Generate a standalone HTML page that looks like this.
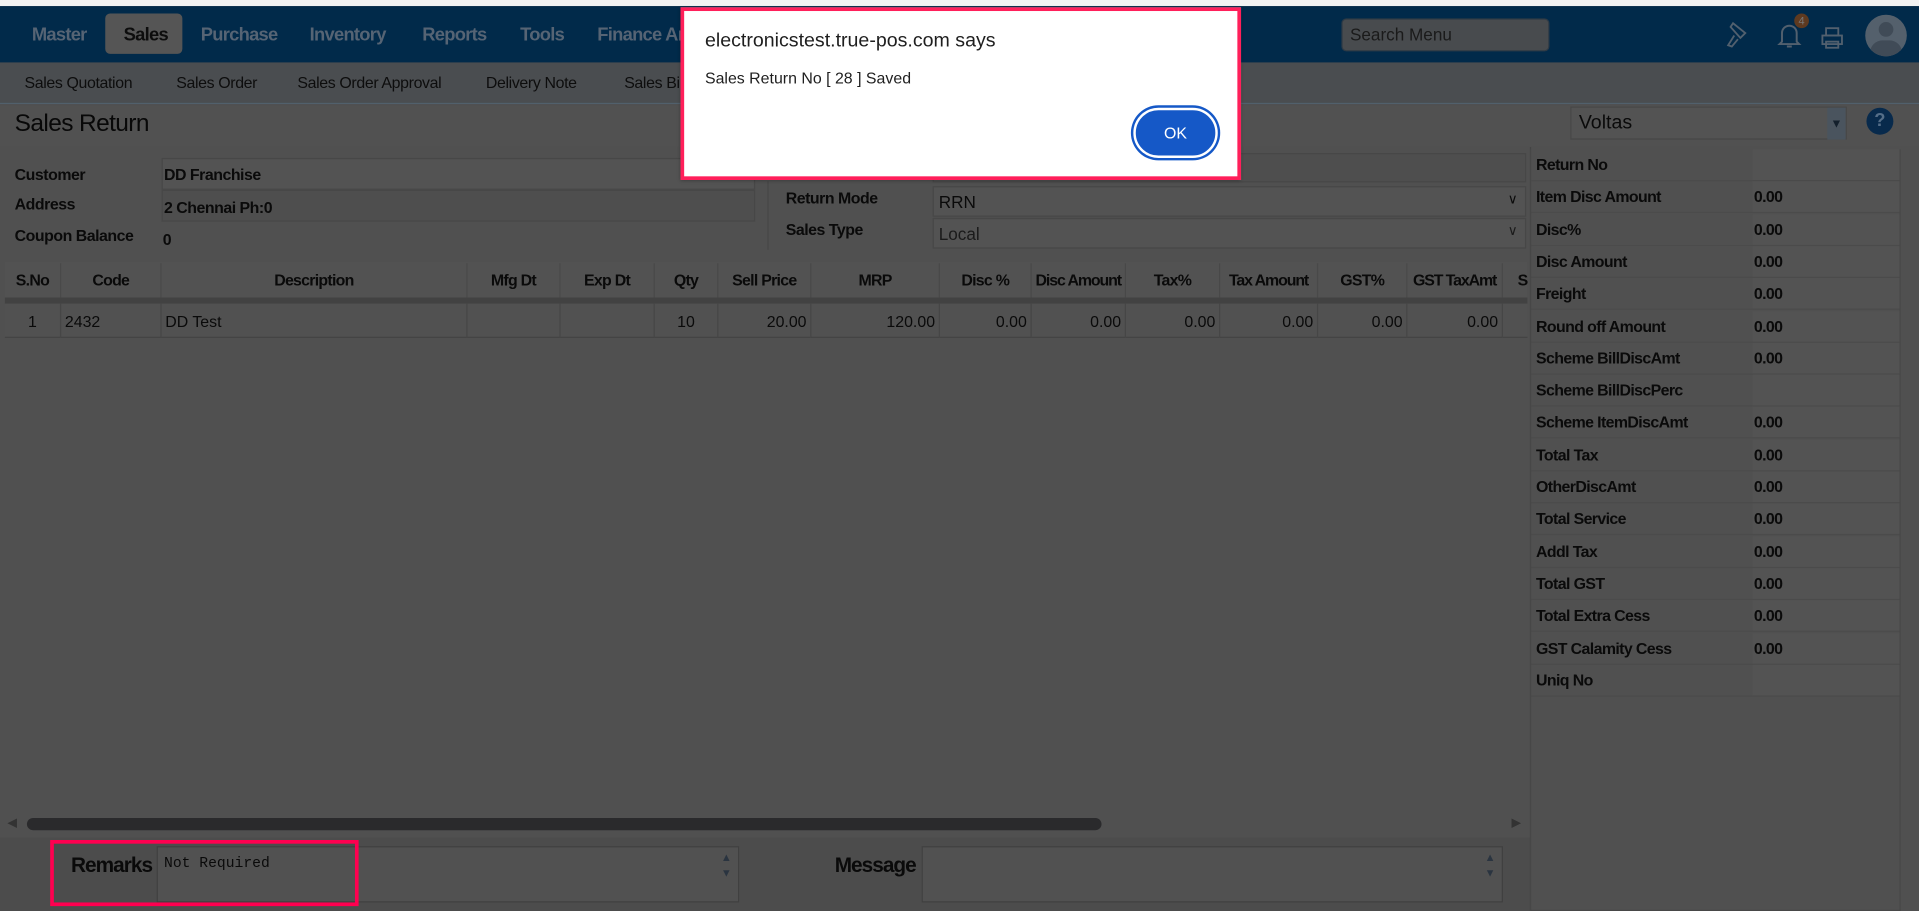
<!DOCTYPE html>
<html><head><meta charset="utf-8"><style>
*{box-sizing:border-box;margin:0;padding:0}
html,body{width:1919px;height:911px;overflow:hidden;background:#505050}
#s{position:absolute;left:0;top:0;width:1568px;height:744px;transform:scale(1.2239,1.2245);transform-origin:0 0;background:#505050;font-family:"Liberation Sans",sans-serif;color:#0a0a0a;font-size:13px;overflow:hidden;white-space:nowrap}
.a{position:absolute}
.nav{left:0;top:5px;width:1568px;height:46px;background:#012a4a}
.nav span{position:absolute;top:15px;font-size:15px;font-weight:bold;color:#566474;letter-spacing:-0.6px}
.sub{left:0;top:51px;width:1568px;height:34px;background:#4a4d50;border-bottom:1px solid #51606c}
.sub span{position:absolute;top:9px;font-size:13px;color:#0d0d0d;letter-spacing:-0.3px}
.fld{background:#535353;border:1px solid #474747}
.lbl{font-weight:bold;font-size:13px;letter-spacing:-0.4px}
.th{position:absolute;top:215px;height:28px;border-right:1px solid #494949;font-weight:bold;text-align:center;line-height:28px;font-size:13px;letter-spacing:-0.6px}
.td{position:absolute;top:248px;height:28px;border-right:1px solid #464646;line-height:30px;font-size:13px;padding:0 3px}
.rp div{position:absolute;left:0;width:301px;height:26px;border-bottom:1px solid #4b4b4b;font-weight:bold;font-size:13px;line-height:26px;padding-left:4px;letter-spacing:-0.5px}
.rp div b{position:absolute;left:181px;top:0;width:120px;height:25px;background:#535353;padding-left:1px}
</style></head><body><div id="s">
<div class="a" style="left:0;top:0;width:1568px;height:5px;background:#f2f2f2"></div>
<div class="a nav">
<div class="a" style="left:86px;top:6px;width:63px;height:33px;background:#555;border-radius:4px"></div>
<span style="left:26px">Master</span><span style="left:101px;color:#0d0d0d">Sales</span><span style="left:164px">Purchase</span><span style="left:253px">Inventory</span><span style="left:345px">Reports</span><span style="left:425px">Tools</span><span style="left:488px">Finance An</span>
<div class="a" style="left:1096px;top:10px;width:170px;height:27px;background:#484b4e;border:1px solid #2e3a45;border-radius:4px;color:#1a1a1a;font-size:14px;padding:4px 6px">Search Menu</div>
<svg class="a" style="left:1408px;top:10px" width="24" height="26" viewBox="0 0 24 26" fill="none" stroke="#52606e" stroke-width="1.5"><path d="M8 4l10 8-4 4-8-9zM9 14l-5 8 3 1 5-6"/></svg>
<svg class="a" style="left:1452px;top:12px" width="20" height="24" viewBox="0 0 20 24" fill="none" stroke="#52606e" stroke-width="1.6"><path d="M4 17V10a6 6 0 0 1 12 0v7l2 2H2zM8 21h4"/></svg>
<div class="a" style="left:1466px;top:6px;width:12px;height:12px;border-radius:6px;background:#5e3a20;color:#777;font-size:9px;text-align:center;line-height:12px">4</div>
<svg class="a" style="left:1487px;top:16px" width="20" height="20" viewBox="0 0 20 20" fill="none" stroke="#52606e" stroke-width="1.5"><rect x="5" y="2" width="10" height="6"/><rect x="2" y="8" width="16" height="7"/><rect x="5" y="13" width="10" height="5"/></svg>
<div class="a" style="left:1524px;top:7px;width:34px;height:34px;border-radius:17px;background:#54606c;overflow:hidden"><div class="a" style="left:11px;top:6px;width:12px;height:12px;border-radius:6px;background:#404b57"></div><div class="a" style="left:4px;top:21px;width:26px;height:20px;border-radius:13px;background:#404b57"></div></div>
</div>
<div class="a sub"><span style="left:20px">Sales Quotation</span><span style="left:144px">Sales Order</span><span style="left:243px">Sales Order Approval</span><span style="left:397px">Delivery Note</span><span style="left:510px">Sales Bi</span></div>
<div class="a" style="left:0;top:86px;width:1568px;height:34px;background:#515151"></div>
<div class="a" style="left:12px;top:90px;font-size:20px;color:#080808;letter-spacing:-0.5px">Sales Return</div>
<div class="a fld" style="left:1283px;top:87px;width:226px;height:27px;font-size:16px;padding:4px 6px">Voltas</div>
<div class="a" style="left:1493px;top:88px;width:15px;height:26px;background:#4a545e;font-size:10px;text-align:center;line-height:28px;color:#14202c">▼</div>
<div class="a" style="left:1525px;top:88px;width:22px;height:22px;border-radius:11px;background:#082a4c;color:#556e88;font-weight:bold;text-align:center;line-height:22px;font-size:15px">?</div>
<div class="a lbl" style="left:12px;top:135px">Customer</div>
<div class="a lbl" style="left:12px;top:159px">Address</div>
<div class="a lbl" style="left:12px;top:185px">Coupon Balance</div>
<div class="a fld" style="left:132px;top:129px;width:485px;height:26px;font-weight:bold;padding:5px 1px;letter-spacing:-0.4px">DD Franchise</div>
<div class="a fld" style="left:132px;top:155px;width:485px;height:26px;font-weight:bold;padding:6px 1px;background:#4e4e4e;letter-spacing:-0.4px">2 Chennai Ph:0</div>
<div class="a" style="left:133px;top:188px;font-weight:bold">0</div>
<div class="a" style="left:627px;top:148px;width:1px;height:56px;background:#474747"></div>
<div class="a fld" style="left:762px;top:125px;width:485px;height:24px;background:#4e4e4e"></div>
<div class="a lbl" style="left:642px;top:154px">Return Mode</div>
<div class="a lbl" style="left:642px;top:180px">Sales Type</div>
<div class="a fld" style="left:762px;top:152px;width:485px;height:25px;padding:4px 4px;font-size:14px">RRN<span style="position:absolute;right:6px;top:3px;font-size:11px">∨</span></div>
<div class="a fld" style="left:762px;top:178px;width:485px;height:25px;padding:4px 4px;font-size:14px;color:#1a1a1a">Local<span style="position:absolute;right:6px;top:3px;font-size:11px">∨</span></div>
<div class="a" style="left:4px;top:214px;width:1244px;height:29px;background:#525252"></div>
<div class="a" style="left:4px;top:243px;width:1244px;height:5px;background:#424242"></div>
<div class="a" style="left:4px;top:248px;width:1244px;height:28px;background:#515151;border-bottom:1px solid #444"></div>
<div class="th" style="left:4px;width:46px">S.No</div><div class="th" style="left:50px;width:82px">Code</div><div class="th" style="left:132px;width:250px">Description</div><div class="th" style="left:382px;width:76px">Mfg Dt</div><div class="th" style="left:458px;width:77px">Exp Dt</div><div class="th" style="left:535px;width:52px">Qty</div><div class="th" style="left:587px;width:76px">Sell Price</div><div class="th" style="left:663px;width:105px">MRP</div><div class="th" style="left:768px;width:75px">Disc %</div><div class="th" style="left:843px;width:77px;letter-spacing:-0.9px">Disc Amount</div><div class="th" style="left:920px;width:77px">Tax%</div><div class="th" style="left:997px;width:80px;letter-spacing:-0.9px">Tax Amount</div><div class="th" style="left:1077px;width:73px">GST%</div><div class="th" style="left:1150px;width:78px;letter-spacing:-0.9px">GST TaxAmt</div><div class="th" style="left:1240px;width:20px;border:0;text-align:left">S</div>
<div class="td" style="left:4px;width:46px;text-align:center">1</div><div class="td" style="left:50px;width:82px">2432</div><div class="td" style="left:132px;width:250px">DD Test</div><div class="td" style="left:382px;width:76px"></div><div class="td" style="left:458px;width:77px"></div><div class="td" style="left:535px;width:52px;text-align:center">10</div><div class="td" style="left:587px;width:76px;text-align:right">20.00</div><div class="td" style="left:663px;width:105px;text-align:right">120.00</div><div class="td" style="left:768px;width:75px;text-align:right">0.00</div><div class="td" style="left:843px;width:77px;text-align:right">0.00</div><div class="td" style="left:920px;width:77px;text-align:right">0.00</div><div class="td" style="left:997px;width:80px;text-align:right">0.00</div><div class="td" style="left:1077px;width:73px;text-align:right">0.00</div><div class="td" style="left:1150px;width:78px;text-align:right">0.00</div>
<div class="a" style="left:6px;top:667px;color:#333;font-size:10px">◀</div>
<div class="a" style="left:22px;top:668px;width:878px;height:10px;border-radius:5px;background:#2a2a2c"></div>
<div class="a" style="left:1235px;top:667px;color:#333;font-size:10px">▶</div>
<div class="a" style="left:0;top:684px;width:1250px;height:60px;background:#4c4c4c"></div>
<div class="a" style="left:128px;top:691px;width:476px;height:46px;border:1px solid #404040;background:#515151"></div>
<div class="a" style="left:134px;top:698px;font-family:'Liberation Mono',monospace;font-size:12px">Not Required</div>
<div class="a" style="left:589px;top:694px;font-size:9px;color:#2a3440;line-height:13px">▲<br>▼</div>
<div class="a" style="left:753px;top:691px;width:475px;height:46px;border:1px solid #404040;background:#515151"></div>
<div class="a" style="left:1213px;top:694px;font-size:9px;color:#2a3440;line-height:13px">▲<br>▼</div>
<div class="a" style="left:58px;top:697px;font-weight:bold;font-size:17px;letter-spacing:-0.8px">Remarks</div>
<div class="a" style="left:682px;top:697px;font-weight:bold;font-size:17px;letter-spacing:-0.8px">Message</div>
<div class="a" style="left:41px;top:686px;width:252px;height:54px;border:3px solid #ff0050"></div>
<div class="a" style="left:1250px;top:120px;width:318px;height:624px;background:#505050;border-left:1px solid #444"></div>
<div class="a" style="left:1250px;top:122px;width:303px;height:622px;border:1px solid #474747;border-top:none"></div>
<div class="a rp" style="left:1251px;top:122px;width:301px;height:450px">
<div style="top:0">Return No<b></b></div><div style="top:26.3px">Item Disc Amount<b>0.00</b></div><div style="top:52.6px">Disc%<b>0.00</b></div><div style="top:78.9px">Disc Amount<b>0.00</b></div><div style="top:105.2px">Freight<b>0.00</b></div><div style="top:131.5px">Round off Amount<b>0.00</b></div><div style="top:157.8px">Scheme BillDiscAmt<b>0.00</b></div><div style="top:184.1px">Scheme BillDiscPerc<b></b></div><div style="top:210.4px">Scheme ItemDiscAmt<b>0.00</b></div><div style="top:236.7px">Total Tax<b>0.00</b></div><div style="top:263px">OtherDiscAmt<b>0.00</b></div><div style="top:289.3px">Total Service<b>0.00</b></div><div style="top:315.6px">Addl Tax<b>0.00</b></div><div style="top:341.9px">Total GST<b>0.00</b></div><div style="top:368.2px">Total Extra Cess<b>0.00</b></div><div style="top:394.5px">GST Calamity Cess<b>0.00</b></div><div style="top:420.8px">Uniq No<b></b></div>
</div>
<div class="a" style="left:556px;top:6px;width:458px;height:141px;background:#fff;border:3px solid #ff1f5a;box-shadow:0 1px 3px rgba(0,0,0,.3)"></div>
<div class="a" style="left:576px;top:25px;font-size:16px;color:#1f1f1f">electronicstest.true-pos.com says</div>
<div class="a" style="left:576px;top:56px;font-size:13px;color:#1f1f1f">Sales Return No [ 28 ] Saved</div>
<div class="a" style="left:924px;top:86px;width:73px;height:45px;border-radius:23px;background:#1558c7;padding:2px"><div style="width:100%;height:100%;border-radius:21px;border:2px solid #fff;background:#1558c7;color:#fff;text-align:center;line-height:37px;font-size:13px">OK</div></div>
</div></body></html>
